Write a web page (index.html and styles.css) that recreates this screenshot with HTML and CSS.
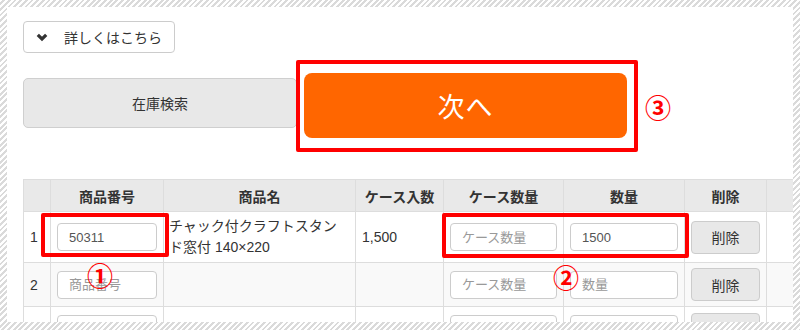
FILE: index.html
```html
<!DOCTYPE html>
<html lang="ja">
<head>
    <meta charset="UTF-8">
    <meta name="viewport" content="width=device-width, initial-scale=1.0">
    <title>在庫検索</title>
    <link rel="stylesheet" href="styles.css">
</head>
<body>
    <div class="frame">
        <div class="panel">
            <button class="more-btn">
                <svg class="chevron" width="12" height="9" viewBox="0 0 12 9">
                    <polyline points="1.8,1.8 6,6 10.2,1.8" fill="none" stroke="#333" stroke-width="3.2"/>
                </svg>
                <span>詳しくはこちら</span>
            </button>

            <div class="actions">
                <button class="search-btn">在庫検索</button>
                <button class="next-btn">次へ</button>
            </div>

            <table class="order-table">
                <colgroup>
                    <col style="width: 27px">
                    <col style="width: 113px">
                    <col style="width: 192px">
                    <col style="width: 88px">
                    <col style="width: 120px">
                    <col style="width: 121px">
                    <col style="width: 82px">
                    <col style="width: 60px">
                </colgroup>
                <thead>
                    <tr>
                        <th></th>
                        <th>商品番号</th>
                        <th>商品名</th>
                        <th>ケース入数</th>
                        <th>ケース数量</th>
                        <th>数量</th>
                        <th>削除</th>
                        <th></th>
                    </tr>
                </thead>
                <tbody>
                    <tr>
                        <td class="num">1</td>
                        <td><input class="field" type="text" value="50311" placeholder="商品番号"></td>
                        <td class="name">チャック付クラフトスタン<br>ド窓付 140×220</td>
                        <td class="count">1,500</td>
                        <td><input class="field" type="text" placeholder="ケース数量"></td>
                        <td><input class="field" type="text" value="1500" placeholder="数量"></td>
                        <td><button class="del-btn">削除</button></td>
                        <td></td>
                    </tr>
                    <tr>
                        <td class="num">2</td>
                        <td><input class="field" type="text" placeholder="商品番号"></td>
                        <td class="name"></td>
                        <td class="count"></td>
                        <td><input class="field" type="text" placeholder="ケース数量"></td>
                        <td><input class="field" type="text" placeholder="数量"></td>
                        <td><button class="del-btn">削除</button></td>
                        <td></td>
                    </tr>
                    <!-- third row is cut off by the frame -->
                    <tr class="row-cut">
                        <td class="num"></td>
                        <td><input class="field" type="text"></td>
                        <td class="name"></td>
                        <td class="count"></td>
                        <td><input class="field" type="text"></td>
                        <td><input class="field" type="text"></td>
                        <td><button class="del-btn"></button></td>
                        <td></td>
                    </tr>
                </tbody>
            </table>

            <!-- annotations -->
            <div class="mark mark-code"></div>
            <div class="mark mark-qty"></div>
            <div class="mark mark-next"></div>
            <span class="mark-num num-1">①</span>
            <span class="mark-num num-2">②</span>
            <span class="mark-num num-3">③</span>
        </div>
    </div>
</body>
</html>
```

FILE: styles.css
```css
* {
    box-sizing: border-box;
}

body {
    margin: 0;
    font-family: "Liberation Sans", Arial, "Noto Sans CJK JP", sans-serif;
    color: #333;
}

.frame {
    padding: 7px;
    height: 330px;
    background: repeating-linear-gradient(135deg, #fff 0 2px, #dadada 2px 4px);
}

.panel {
    position: relative;
    height: 315px;
    overflow: hidden;
    background-color: #fff;
    padding: 14px 0 0 16px;
}

button {
    font-family: inherit;
    color: #333;
    cursor: pointer;
}

.more-btn {
    display: flex;
    align-items: center;
    width: 152px;
    height: 32px;
    margin: 0;
    padding: 0 0 0 12px;
    background-color: #fff;
    border: 1px solid #ccc;
    border-radius: 4px;
    font-size: 14px;
}

.chevron {
    margin-right: 16px;
    margin-top: 1px;
}

.actions {
    display: flex;
    align-items: flex-start;
    margin-top: 20px;
}

.search-btn {
    width: 274px;
    height: 50px;
    margin: 5px 0 0 0;
    background-color: #e8e8e8;
    border: 1px solid #cfcfcf;
    border-radius: 5px;
    font-size: 14px;
}

.next-btn {
    width: 323px;
    height: 65px;
    margin: 0 0 0 7px;
    background-color: #ff6600;
    border: none;
    border-radius: 8px;
    color: #fff;
    font-size: 27px;
    letter-spacing: 1px;
}

.order-table {
    margin-top: 41px;
    width: 803px;
    table-layout: fixed;
    border-collapse: collapse;
    font-size: 14px;
}

.order-table th,
.order-table td {
    border: 1px solid #ddd;
    padding: 5px 6px;
}

.order-table th {
    height: 32px;
    background-color: #e9e9e9;
    font-weight: bold;
    text-align: center;
}

.order-table tbody tr:nth-child(even) td {
    background-color: #f9f9f9;
}

.order-table td.name {
    padding: 4px 5px;
    line-height: 21px;
}

.order-table .row-cut td {
    vertical-align: top;
    padding-top: 8px;
}

.field {
    display: block;
    width: 100%;
    height: 28px;
    padding: 0 11px;
    border: 1px solid #ccc;
    border-radius: 4px;
    font-family: inherit;
    font-size: 13px;
    color: #555;
}

.field::placeholder {
    color: #999;
}

.del-btn {
    display: block;
    width: 100%;
    height: 33px;
    margin: 0;
    background-color: #e8e8e8;
    border: 1px solid #ccc;
    border-radius: 4px;
    font-size: 14px;
}

.row-cut .del-btn {
    margin-top: -2px;
}

.mark {
    position: absolute;
    border: 4px solid #ff0000;
    border-radius: 2px;
}

.mark-code {
    left: 34px;
    top: 206px;
    width: 128px;
    height: 44px;
}

.mark-qty {
    left: 435px;
    top: 206px;
    width: 247px;
    height: 45px;
}

.mark-next {
    left: 289px;
    top: 53px;
    width: 342px;
    height: 92px;
}

.mark-num {
    position: absolute;
    font-family: "Noto Sans CJK JP", sans-serif;
    font-size: 26px;
    font-weight: bold;
    line-height: 1;
    color: #ff0000;
}

.num-1 {
    left: 80px;
    top: 255px;
}

.num-2 {
    left: 546px;
    top: 257px;
}

.num-3 {
    left: 638px;
    top: 87px;
}
```
